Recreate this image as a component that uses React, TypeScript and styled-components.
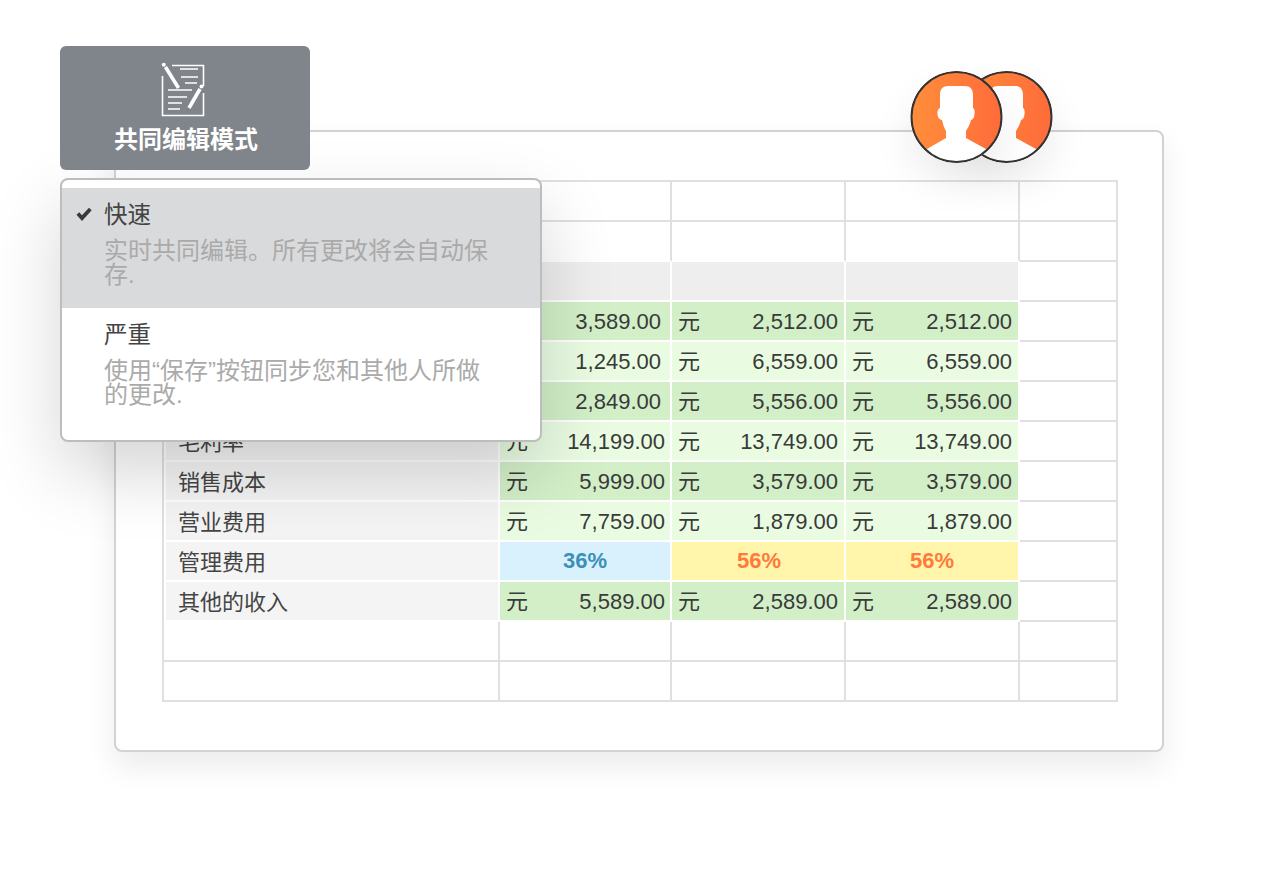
import React from "react";
import styled, { createGlobalStyle } from "styled-components";

const Global = createGlobalStyle`
  html, body { margin: 0; padding: 0; background: #fff; }
  body { font-family: "Liberation Sans", "Noto Sans CJK SC", sans-serif; color: #3a3a3a; }
`;

const Page = styled.div`
  position: relative;
  width: 1280px;
  height: 880px;
  padding: 130px 0 0 114px;
  box-sizing: border-box;
  overflow: hidden;
`;

const Sheet = styled.section`
  width: 1050px;
  height: 622px;
  box-sizing: border-box;
  padding: 48px 46px;
  background: #fff;
  border: 2px solid #d2d2d2;
  border-radius: 8px;
  box-shadow: 0 15px 30px rgba(0, 0, 0, 0.08);
`;

const Grid = styled.div`
  display: grid;
  grid-template-columns: 336px 172px 174px 174px 98px;
  grid-auto-rows: 40px;
  width: 956px;
  box-sizing: border-box;
  border-left: 2px solid #e0e0e0;
  border-top: 2px solid #e0e0e0;
`;

type Tone = "blank" | "top" | "head" | "green" | "light" | "blue" | "yellow" | "label" | "end";

const fills: Record<Tone, string> = {
  blank: "#fff",
  top: "#fff",
  end: "#fff",
  head: "#eeeeee",
  green: "#d2efc8",
  light: "#e9fce2",
  blue: "#d9f1fd",
  yellow: "#fff6ab",
  label: "#f4f4f4",
};

const Cell = styled.div<{ $tone: Tone; $pad?: number }>`
  box-sizing: border-box;
  display: flex;
  align-items: center;
  justify-content: space-between;
  padding: 0 ${(p) => p.$pad ?? 6}px 0 6px;
  font-size: 22px;
  white-space: nowrap;
  background: ${(p) => fills[p.$tone]};
  background-clip: padding-box;
  border-right: 2px solid ${(p) => (p.$tone === "blank" || p.$tone === "top" || p.$tone === "end" ? "#e0e0e0" : "#fff")};
  border-bottom: 2px solid ${(p) => (p.$tone === "blank" || p.$tone === "end" ? "#e0e0e0" : "#fff")};
`;

const LabelCell = styled(Cell)`
  border-left: 2px solid #fff;
  padding-left: 12px;
  color: #444;
  overflow: hidden;
`;

const LabelText = styled.span`
  margin-bottom: 2px;
`;

const Unit = styled.span`
  margin-bottom: 4px;
`;

const Amount = styled.span`
  margin-top: 2px;
`;

const Percent = styled.b<{ $color: string }>`
  flex: 1;
  text-align: center;
  color: ${(p) => p.$color};
`;

const Tab = styled.header`
  position: absolute;
  left: 60px;
  top: 46px;
  width: 250px;
  height: 124px;
  box-sizing: border-box;
  padding-top: 16px;
  display: flex;
  flex-direction: column;
  align-items: center;
  background: #7f858a;
  border-radius: 6px;
  color: #fff;
`;

const TabIcon = styled.svg`
  margin-right: 4px;
`;

const TabTitle = styled.div`
  margin-top: 4px;
  padding-left: 2px;
  font-size: 24px;
  line-height: 36px;
  font-weight: 700;
`;

const Menu = styled.div`
  position: absolute;
  left: 60px;
  top: 178px;
  width: 482px;
  height: 264px;
  box-sizing: border-box;
  padding-top: 8px;
  background: #fff;
  border: 2px solid #bdbdbd;
  border-radius: 8px;
  box-shadow: 0 30px 70px rgba(0, 0, 0, 0.17);
`;

const Item = styled.div<{ $active?: boolean }>`
  position: relative;
  height: 120px;
  box-sizing: border-box;
  padding: 15px 46px 0 42px;
  background: ${(p) => (p.$active ? "#d9dadc" : "transparent")};
`;

const ItemTitle = styled.div`
  font-size: 23.5px;
  line-height: 24px;
  color: #444;
`;

const ItemText = styled.div`
  margin-top: 12px;
  font-size: 24px;
  line-height: 24px;
  color: #aaa;
`;

const Check = styled.svg`
  position: absolute;
  left: 14px;
  top: 19px;
`;

const Avatars = styled.div`
  position: absolute;
  left: 910px;
  top: 71px;
  display: flex;
`;

const Avatar = styled.svg<{ $behind?: boolean }>`
  display: block;
  margin-left: ${(p) => (p.$behind ? "-43px" : "0")};
  z-index: ${(p) => (p.$behind ? 0 : 1)};
  border-radius: 50%;
  box-shadow: 0 20px 40px rgba(0, 0, 0, 0.08);
`;

const Person = ({ behind, id }: { behind?: boolean; id: string }) => (
  <Avatar $behind={behind} width="93" height="92" viewBox="0 0 93 92">
    <defs>
      <linearGradient id={id} x1="0" y1="0" x2="1" y2="0">
        <stop offset="0" stopColor="#ff8e3b" />
        <stop offset="1" stopColor="#ff6b3a" />
      </linearGradient>
      <clipPath id={`${id}c`}>
        <circle cx="46.5" cy="46" r="45.5" />
      </clipPath>
    </defs>
    <circle cx="46.5" cy="46" r="45.5" fill={`url(#${id})`} />
    <path
      clipPath={`url(#${id}c)`}
      fill="#fff"
      d="M38 15H55C60 15 63 18 63 24V37C65 38 65 42 64 46C63 48 62 49 61 49C60 53 58 57 56 60V67L76 78L92 95H0L17 78L36 67V60C34 57 33 53 32 49C31 49 29 48 28 46C27 42 27 38 30 37V24C30 18 33 15 38 15Z"
    />
    <circle cx="46.5" cy="46" r="45" fill="none" stroke="#333" strokeWidth="2" />
  </Avatar>
);

const EditIcon = () => (
  <TabIcon width="46" height="56" viewBox="0 0 46 56" fill="none" stroke="#fff" strokeWidth="1.6">
    <path d="M12 3.5H43.5V24M43.5 31V53.5H2.5V14" />
    <path d="M20 7H38M21 15H38M25 21H37M8 28H32M8 35H27M8 41H22M8 47H20" />
    <path d="M5.5 5L18.5 26" strokeWidth="3.6" />
    <path d="M40 27L29 46" strokeWidth="3.6" />
    <circle cx="3.8" cy="2.8" r="2" fill="#fff" stroke="none" />
    <circle cx="41.5" cy="24.6" r="2" fill="#fff" stroke="none" />
  </TabIcon>
);

type Row = { tone: Tone; label?: string; pad?: number; vals: string[] };

const money: Row[] = [
  { tone: "green", pad: 9, vals: ["3,589.00", "2,512.00", "2,512.00"] },
  { tone: "light", pad: 9, vals: ["1,245.00", "6,559.00", "6,559.00"] },
  { tone: "green", pad: 9, vals: ["2,849.00", "5,556.00", "5,556.00"] },
  { tone: "light", label: "毛利率", pad: 5, vals: ["14,199.00", "13,749.00", "13,749.00"] },
  { tone: "green", label: "销售成本", pad: 5, vals: ["5,999.00", "3,579.00", "3,579.00"] },
  { tone: "light", label: "营业费用", pad: 5, vals: ["7,759.00", "1,879.00", "1,879.00"] },
];

const BlankRow = ({ tone }: { tone: Tone }) => (
  <>
    <Cell $tone={tone} />
    <Cell $tone={tone} />
    <Cell $tone={tone} />
    <Cell $tone={tone} />
    <Cell $tone="end" />
  </>
);

const MoneyRow = ({ row }: { row: Row }) => (
  <>
    <LabelCell $tone="label">
      <LabelText>{row.label}</LabelText>
    </LabelCell>
    {row.vals.map((v, i) => (
      <Cell $tone={row.tone} $pad={i === 0 ? row.pad : 6} key={i}>
        <Unit>元</Unit>
        <Amount>{v}</Amount>
      </Cell>
    ))}
    <Cell $tone="end" />
  </>
);

export default function App() {
  return (
    <Page>
      <Global />
      <Sheet>
        <Grid>
          <BlankRow tone="blank" />
          <BlankRow tone="top" />
          <BlankRow tone="head" />
          {money.map((r, i) => (
            <MoneyRow row={r} key={i} />
          ))}
          <LabelCell $tone="label">
            <LabelText>管理费用</LabelText>
          </LabelCell>
          <Cell $tone="blue">
            <Percent $color="#3a90b8">36%</Percent>
          </Cell>
          <Cell $tone="yellow" $pad={4}>
            <Percent $color="#ff7a3c">56%</Percent>
          </Cell>
          <Cell $tone="yellow">
            <Percent $color="#ff7a3c">56%</Percent>
          </Cell>
          <Cell $tone="end" />
          <MoneyRow row={{ tone: "green", label: "其他的收入", pad: 5, vals: ["5,589.00", "2,589.00", "2,589.00"] }} />
          <BlankRow tone="blank" />
          <BlankRow tone="blank" />
        </Grid>
      </Sheet>

      <Avatars>
        <Person id="pa" />
        <Person id="pb" behind />
      </Avatars>

      <Menu>
        <Item $active>
          <Check width="16" height="15" viewBox="0 0 16 15">
            <path d="M0.5 7.8L3.2 5.2L6 8.2L13 0.8L15.7 3.2L6 14Z" fill="#3a3a3a" />
          </Check>
          <ItemTitle>快速</ItemTitle>
          <ItemText>实时共同编辑。所有更改将会自动保存.</ItemText>
        </Item>
        <Item>
          <ItemTitle>严重</ItemTitle>
          <ItemText>使用“保存”按钮同步您和其他人所做的更改.</ItemText>
        </Item>
      </Menu>

      <Tab>
        <EditIcon />
        <TabTitle>共同编辑模式</TabTitle>
      </Tab>
    </Page>
  );
}
